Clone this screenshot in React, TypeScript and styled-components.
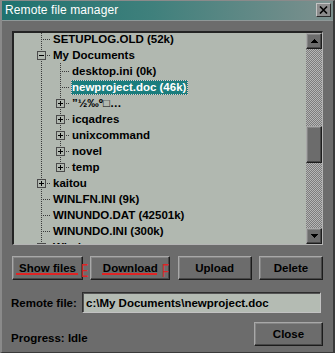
import React from 'react';
import styled, { createGlobalStyle, css } from 'styled-components';

const FACE = '#6c6c6c';
const TREE_BG = '#b1b8b0';
const DOT = '#3a3a3a';
const FONT = '"Liberation Sans", Arial, sans-serif';

const Global = createGlobalStyle`
  html, body { margin: 0; padding: 0; background: ${FACE}; }
  body { font-family: ${FONT}; }
  * { box-sizing: border-box; }
`;

const Window = styled.div`
  width: 335px;
  height: 353px;
  background: ${FACE};
  border-top: 1px solid #8a8a8a;
  border-left: 2px solid #8a8a8a;
  border-right: 2px solid #3a3a3a;
  border-bottom: 1px solid #3a3a3a;
  display: flex;
  flex-direction: column;
  overflow: hidden;
`;

const TitleBar = styled.div`
  height: 20px;
  flex: none;
  display: flex;
  align-items: center;
  justify-content: space-between;
  padding: 0 2px 1px 3px;
  background: linear-gradient(to right, #1f726f 0%, #3f807c 45%, #7d908e 100%);
  border-bottom: 1px solid #8f9898;
`;

const TitleText = styled.span`
  color: #ffffff;
  font-size: 12px;
  letter-spacing: 0.1px;
`;

const TitleClose = styled.div`
  width: 15px;
  height: 14px;
  background: #8c8c8c;
  border-top: 1px solid #c4c4c4;
  border-left: 1px solid #c4c4c4;
  border-right: 1px solid #2a2a2a;
  border-bottom: 1px solid #2a2a2a;
  display: flex;
  align-items: center;
  justify-content: center;
`;

const Body = styled.div`
  flex: 1;
  display: flex;
  flex-direction: column;
  padding: 10px 10px 0 10px;
`;

const Panel = styled.div`
  height: 214px;
  flex: none;
  display: flex;
  background: ${TREE_BG};
  border-top: 2px solid #242424;
  border-left: 2px solid #242424;
  border-right: 1px solid #b4b4b4;
  border-bottom: 1px solid #b4b4b4;
  overflow: hidden;
`;

const TreeArea = styled.div`
  flex: 1;
  overflow: hidden;
  padding-left: 18px;
`;

const TreeList = styled.div`
  margin-top: -2px;
  display: flex;
  flex-direction: column;
`;

const Row = styled.div`
  display: flex;
  height: 16px;
  flex: none;
`;

const Guide = styled.div<{ $v: 'full' | 'top' | 'none'; $h?: boolean }>`
  position: relative;
  flex: none;
  width: 19px;
  height: 16px;
  ${(p) =>
    p.$v !== 'none' &&
    css`
      &::before {
        content: '';
        position: absolute;
        left: 9px;
        top: 0;
        width: 1px;
        height: ${p.$v === 'full' ? '16px' : '9px'};
        background: repeating-linear-gradient(to bottom, ${DOT} 0 1px, transparent 1px 2px);
      }
    `}
  ${(p) =>
    p.$h &&
    css`
      &::after {
        content: '';
        position: absolute;
        left: 10px;
        top: 8px;
        width: 9px;
        height: 1px;
        background: repeating-linear-gradient(to right, transparent 0 1px, ${DOT} 1px 2px);
      }
    `}
`;

const Expander = styled.span`
  position: absolute;
  left: 5px;
  top: 4px;
  width: 9px;
  height: 9px;
  border: 1px solid #4a4a4a;
  background: ${TREE_BG};
  z-index: 1;
  display: flex;
`;

const Label = styled.span<{ $selected?: boolean }>`
  height: 15px;
  margin-top: 1px;
  margin-left: 1px;
  padding: 0 2px 0 1px;
  line-height: 15px;
  font-size: 11.5px;
  font-weight: bold;
  white-space: nowrap;
  color: #000;
  ${(p) =>
    p.$selected &&
    css`
      background: #1b7d7d;
      color: #ffffff;
      outline: 1px dotted #e8c8c8;
      outline-offset: -1px;
    `}
`;

const ScrollBar = styled.div`
  width: 16px;
  flex: none;
  display: flex;
  flex-direction: column;
  background-color: #7c7c7c;
  background-image: conic-gradient(#b6b6b6 25%, transparent 0 50%, #b6b6b6 0 75%, transparent 0);
  background-size: 2px 2px;
`;

const bevel = css`
  background: ${FACE};
  border-top: 1px solid #a8a8a8;
  border-left: 1px solid #a8a8a8;
  border-right: 1px solid #1c1c1c;
  border-bottom: 1px solid #1c1c1c;
  box-shadow: inset -1px -1px 0 #474747, inset 1px 1px 0 #858585;
`;

const ScrollButton = styled.div`
  ${bevel};
  width: 16px;
  height: 16px;
  flex: none;
  display: flex;
  align-items: center;
  justify-content: center;
`;

const Track = styled.div<{ $offset: number }>`
  flex: 1;
  padding-top: ${(p) => p.$offset}px;
`;

const Thumb = styled.div`
  ${bevel};
  width: 16px;
  height: 37px;
`;

const ButtonRow = styled.div`
  margin-top: 11px;
  display: flex;
  justify-content: space-between;
  height: 24px;
`;

const Button = styled.div<{ $w: number }>`
  ${bevel};
  position: relative;
  width: ${(p) => p.$w}px;
  height: 24px;
  display: flex;
  align-items: center;
  justify-content: center;
  font-size: 11.5px;
  font-weight: bold;
  color: #000;
`;

const Mark = styled.span<{ $left: number }>`
  position: absolute;
  left: ${(p) => p.$left}px;
  top: 5px;
  font-size: 18px;
  line-height: 18px;
  font-weight: normal;
  color: #e02424;
  transform: scaleX(0.6);
  transform-origin: left center;
  z-index: 2;
`;

const Underline = styled.span<{ $left: number; $w: number }>`
  position: absolute;
  left: ${(p) => p.$left}px;
  top: 16px;
  width: ${(p) => p.$w}px;
  height: 2px;
  background: #e02424;
`;

const FieldRow = styled.div`
  margin-top: 12px;
  display: flex;
  align-items: center;
  height: 21px;
`;

const FieldLabel = styled.span`
  width: 71px;
  flex: none;
  margin-left: -1px;
  font-size: 11.5px;
  font-weight: bold;
  color: #000;
  white-space: nowrap;
`;

const TextBox = styled.div`
  width: 239px;
  height: 21px;
  background: #b4bbb3;
  border-top: 1px solid #2e2e2e;
  border-left: 1px solid #2e2e2e;
  border-right: 1px solid #c2c2c2;
  border-bottom: 1px solid #c2c2c2;
  box-shadow: inset 1px 1px 0 #555;
  padding-left: 3px;
  display: flex;
  align-items: center;
  font-size: 11.5px;
  font-weight: bold;
  color: #000;
  white-space: nowrap;
`;

const StatusRow = styled.div`
  margin-top: 9px;
  display: flex;
  align-items: center;
  justify-content: space-between;
`;

const Status = styled.span`
  margin-top: 8px;
  margin-left: -1px;
  font-size: 11.5px;
  font-weight: bold;
  color: #000;
`;

type Node = {
  level: number;
  label: string;
  exp?: 'plus' | 'minus';
  last?: boolean;
  selected?: boolean;
};

const nodes: Node[] = [
  { level: 0, label: 'SETUPLOG.OLD (52k)' },
  { level: 0, label: 'My Documents', exp: 'minus' },
  { level: 1, label: 'desktop.ini (0k)' },
  { level: 1, label: 'newproject.doc (46k)', selected: true },
  { level: 1, label: '”½‰º□…', exp: 'plus' },
  { level: 1, label: 'icqadres', exp: 'plus' },
  { level: 1, label: 'unixcommand', exp: 'plus' },
  { level: 1, label: 'novel', exp: 'plus' },
  { level: 1, label: 'temp', exp: 'plus', last: true },
  { level: 0, label: 'kaitou', exp: 'plus' },
  { level: 0, label: 'WINLFN.INI (9k)' },
  { level: 0, label: 'WINUNDO.DAT (42501k)' },
  { level: 0, label: 'WINUNDO.INI (300k)' },
  { level: 0, label: 'Windows', exp: 'plus' },
];

const ExpIcon = ({ kind }: { kind: 'plus' | 'minus' }) => (
  <svg width="7" height="7" viewBox="0 0 7 7" shapeRendering="crispEdges">
    <rect x="1" y="3" width="5" height="1" fill="#000" />
    {kind === 'plus' && <rect x="3" y="1" width="1" height="5" fill="#000" />}
  </svg>
);

const Arrow = ({ dir }: { dir: 'up' | 'down' }) => (
  <svg width="7" height="4" viewBox="0 0 7 4" shapeRendering="crispEdges">
    {dir === 'up' ? (
      <polygon points="3.5,0 7,4 0,4" fill="#000" />
    ) : (
      <polygon points="0,0 7,0 3.5,4" fill="#000" />
    )}
  </svg>
);

const TreeRow = ({ n }: { n: Node }) => (
  <Row>
    {n.level === 1 && <Guide $v="full" />}
    <Guide $v={n.last ? 'top' : 'full'} $h>
      {n.exp && (
        <Expander>
          <ExpIcon kind={n.exp} />
        </Expander>
      )}
    </Guide>
    <Label $selected={n.selected}>{n.label}</Label>
  </Row>
);

export default function App() {
  return (
    <>
      <Global />
      <Window>
        <TitleBar>
          <TitleText>Remote file manager</TitleText>
          <TitleClose>
            <svg width="9" height="8" viewBox="0 0 9 8">
              <path d="M1 0.5 L8 7.5 M8 0.5 L1 7.5" stroke="#000" strokeWidth="1.6" />
            </svg>
          </TitleClose>
        </TitleBar>
        <Body>
          <Panel>
            <TreeArea>
              <TreeList>
                {nodes.map((n, i) => (
                  <TreeRow key={i} n={n} />
                ))}
              </TreeList>
            </TreeArea>
            <ScrollBar>
              <ScrollButton>
                <Arrow dir="up" />
              </ScrollButton>
              <Track $offset={77}>
                <Thumb />
              </Track>
              <ScrollButton>
                <Arrow dir="down" />
              </ScrollButton>
            </ScrollBar>
          </Panel>
          <ButtonRow>
            <Button $w={71}>
              Show files
              <Underline $left={3} $w={62} />
              <Mark $left={68}>E</Mark>
            </Button>
            <Button $w={80}>
              Download
              <Underline $left={11} $w={55} />
              <Mark $left={71}>F</Mark>
            </Button>
            <Button $w={74}>Upload</Button>
            <Button $w={64}>Delete</Button>
          </ButtonRow>
          <FieldRow>
            <FieldLabel>Remote file:</FieldLabel>
            <TextBox>c:\My Documents\newproject.doc</TextBox>
          </FieldRow>
          <StatusRow>
            <Status>Progress: Idle</Status>
            <Button $w={69}>Close</Button>
          </StatusRow>
        </Body>
      </Window>
    </>
  );
}
